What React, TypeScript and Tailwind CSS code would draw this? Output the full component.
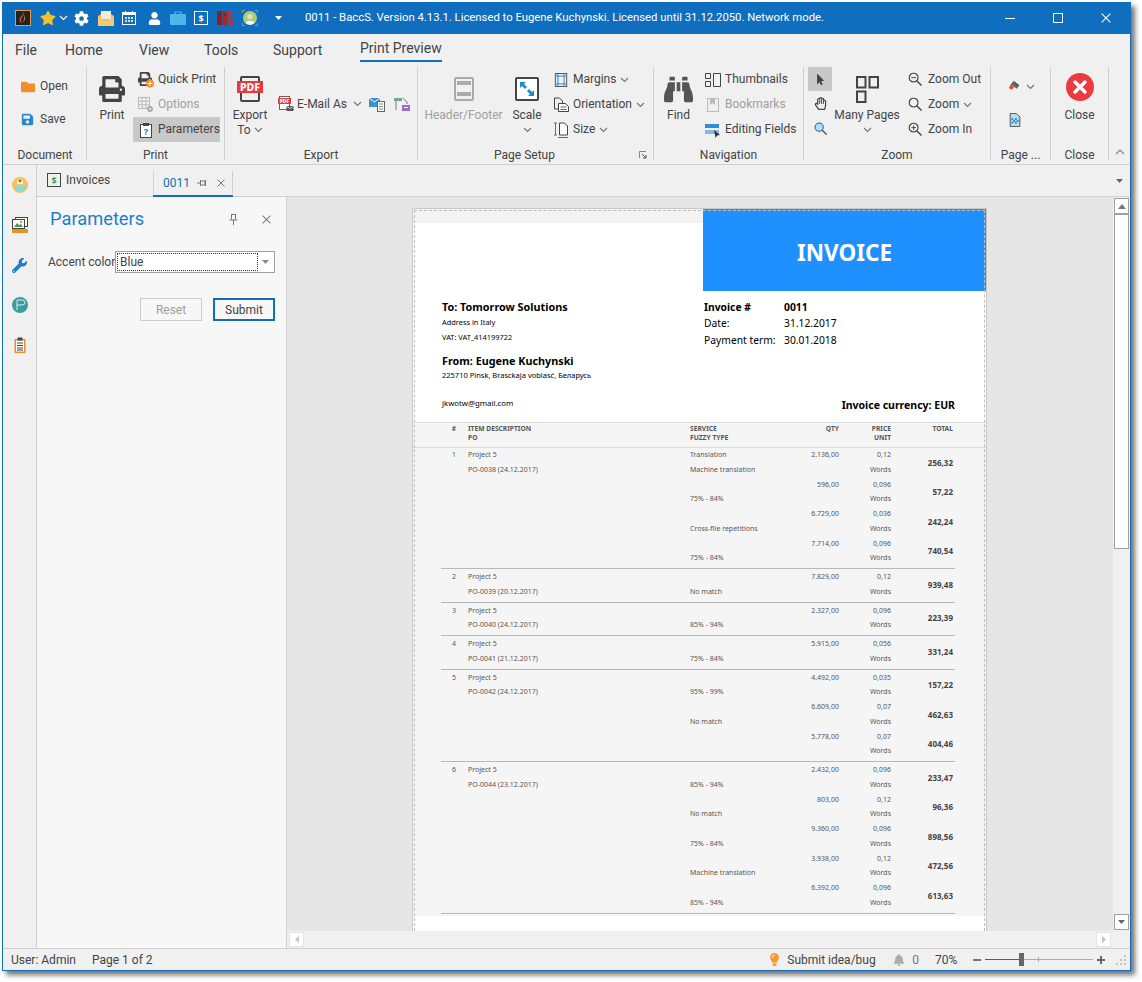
import React from "react";
import {
  FaBell,
  FaBinoculars,
  FaCog,
  FaFolder,
  FaLightbulb,
  FaMousePointer,
  FaPrint,
  FaRegHandPaper,
  FaSave,
  FaStar,
  FaUser,
  FaWrench,
} from "react-icons/fa";

const Chevron = ({ className = "" }: { className?: string }) => (
  <svg width="9" height="6" viewBox="0 0 9 6" className={`shrink-0 ${className}`}>
    <path d="M1 1l3.5 3.5L8 1" fill="none" stroke="#777" strokeWidth="1.2" />
  </svg>
);

const Caret = ({ color = "#666" }: { color?: string }) => (
  <svg width="7" height="4" viewBox="0 0 7 4" className="shrink-0">
    <path d="M0 0h7L3.500 4z" fill={color} />
  </svg>
);

const Glyph = ({ size = 16, children }: { size?: number; children: React.ReactNode }) => (
  <svg width={size} height={size} viewBox="0 0 16 16" className="shrink-0">
    {children}
  </svg>
);

const AppLogo = () => (
  <Glyph>
    <rect x="0.5" y="0.500" width="15" height="15" fill="#222" stroke="#e89a3c" />
    <path d="M9 2c1 3-3 5-3 8 0 2 1 3 2 3-3 0-4-2-3-5 1-2 3-3 4-6z" fill="#d8503c" />
    <path d="M9 5c1 2 0 5-1 7 2-1 3-5 1-7z" fill="#e89a3c" />
  </Glyph>
);

const MailIcon = () => (
  <Glyph>
    <path d="M0 6l8-5 8 5v9H0z" fill="#edbf5f" />
    <rect x="3" y="1" width="10" height="8" fill="#f5ead6" />
    <path d="M0 7l8 5 8-5v9H0z" fill="#f1cb74" />
  </Glyph>
);

const CalendarIcon = () => (
  <Glyph>
    <rect x="1.500" y="2.500" width="13" height="12" fill="none" stroke="#fff" />
    <path d="M2 3h12v2H2zM4 1h1v3H4zM11 1h1v3h-1z" fill="#fff" />
    <path d="M4 7h2v2H4zM7 7h2v2H7zM10 7h2v2h-2zM4 10h2v2H4zM7 10h2v2H7zM10 10h2v2h-2z" fill="#cfe3f5" />
  </Glyph>
);

const CaseIcon = () => (
  <Glyph>
    <path d="M5 4V2h6v2" fill="none" stroke="#4cb8ea" strokeWidth="1.200" />
    <rect x="0" y="4" width="16" height="11" rx="1" fill="#4cb8ea" />
  </Glyph>
);

const DollarDoc = ({ dark = false }: { dark?: boolean }) => (
  <svg width="14" height="14" viewBox="0 0 14 14" className="shrink-0">
    <rect x="0.500" y="0.500" width="13" height="13" fill={dark ? "none" : "#106ebe"} stroke={dark ? "#444" : "#fff"} />
    <text x="7" y="10.500" textAnchor="middle" fontSize="9" fontWeight="700" fill={dark ? "#2e9e4a" : "#fff"} fontFamily="Noto Sans, sans-serif">
      $
    </text>
  </svg>
);

const BooksIcon = () => (
  <Glyph>
    <rect x="0" y="1" width="5" height="14" fill="#8e1f24" />
    <rect x="5.500" y="1" width="5" height="14" fill="#a5262b" />
    <path d="M11 2l3-1 2 14h-4z" fill="#c22f32" />
    <path d="M1 4h3v1H1zM6.500 4h3v1h-3z" fill="#333" />
  </Glyph>
);

const AvatarIcon = () => (
  <Glyph>
    <circle cx="8" cy="8" r="7" fill="#a4d07c" />
    <circle cx="8" cy="6.500" r="2.500" fill="#f5d9b8" />
    <path d="M3.500 13c1-3 8-3 9 0a7 7 0 0 1-9 0z" fill="#f7f7f7" />
    <path d="M0 0h3v1H1v2H0zM16 0h-3v1h2v2h1zM0 16h3v-1H1v-2H0zM16 16h-3v-1h2v-2h1z" fill="#7a9a8a" />
  </Glyph>
);

const QuickPrintIcon = () => (
  <Glyph>
    <FaPrint x="0" y="0" size="14" color="#444" />
    <circle cx="12" cy="11.500" r="4" fill="#ee8f2c" />
    <path d="M11.500 9h1v2h2v1h-2v2h-1v-2h-2v-1h2z" fill="#fff" />
  </Glyph>
);

const OptionsIcon = () => (
  <Glyph>
    <path d="M.5.500h11v11H.5zM4.200.500v11M7.800.500v11M.5 4.200h11M.5 7.800h11" fill="none" stroke="#bbb" />
    <circle cx="12" cy="12" r="3" fill="#aaa" />
    <circle cx="12" cy="12" r="1" fill="#f0f0f0" />
  </Glyph>
);

const ParamIcon = () => (
  <Glyph>
    <rect x="2.500" y="2.500" width="11" height="13" fill="#fff" stroke="#444" />
    <rect x="5" y="1" width="6" height="3" fill="#444" />
    <text x="8" y="13" textAnchor="middle" fontSize="9" fontWeight="700" fill="#106ebe" fontFamily="Noto Sans, sans-serif">
      ?
    </text>
  </Glyph>
);

const PdfIcon = () => (
  <svg width="26" height="27" viewBox="0 0 26 27" className="shrink-0">
    <path d="M4 8V2q0-1 1-1h16q1 0 1 1v6M4 17v7q0 1 1 1h16q1 0 1-1v-7" fill="none" stroke="#444" strokeWidth="2" />
    <rect x="0" y="5" width="26" height="12" fill="#ea3a3e" />
    <text x="13" y="15" textAnchor="middle" fontSize="10.500" fontWeight="800" fill="#fff" fontFamily="Noto Sans, sans-serif">
      PDF
    </text>
  </svg>
);

const PdfMailIcon = () => (
  <Glyph>
    <rect x="1.500" y="0.500" width="10" height="13" fill="#fff" stroke="#666" />
    <rect x="0" y="2" width="13" height="6" fill="#e23b3e" />
    <text x="6.500" y="7" textAnchor="middle" fontSize="5" fontWeight="800" fill="#fff" fontFamily="Noto Sans, sans-serif">
      PDF
    </text>
    <rect x="8.500" y="10" width="7" height="5" fill="#555" />
    <path d="M9 10.500l3 2 3-2" fill="none" stroke="#fff" strokeWidth=".7" />
  </Glyph>
);

const MailDocIcon = () => (
  <Glyph>
    <path d="M0 2h11v9H0z" fill="#3f8fd2" />
    <path d="M0 2l5.500 4L11 2" fill="none" stroke="#fff" />
    <rect x="8.500" y="5.500" width="7" height="10" fill="#fff" stroke="#666" />
    <path d="M10 8h4M10 10.500h4M10 13h4" stroke="#888" />
  </Glyph>
);

const DocLockIcon = () => (
  <Glyph>
    <path d="M0 2h8v3H0z" fill="#6da89c" />
    <path d="M2 5v9M8.500 2L13 6v2" fill="none" stroke="#777" />
    <rect x="8" y="9" width="8" height="6" fill="#9c6fc0" />
    <path d="M10 11.500h4" stroke="#fff" />
  </Glyph>
);

const HeaderFooterIcon = () => (
  <svg width="20" height="24" viewBox="0 0 20 24" className="shrink-0">
    <rect x="1" y="1" width="18" height="22" rx="1" fill="none" stroke="#aaa" strokeWidth="2" />
    <rect x="3" y="4" width="14" height="4" fill="#aaa" />
    <rect x="3" y="15" width="14" height="4" fill="#aaa" />
  </svg>
);

const ScaleIcon = () => (
  <svg width="24" height="24" viewBox="0 0 24 24" className="shrink-0">
    <rect x="1" y="1" width="22" height="22" rx="1" fill="#fff" stroke="#444" strokeWidth="2" />
    <path d="M5 5h6l-2 2 3 3-2 2-3-3-2 2zM19 19h-6l2-2-3-3 2-2 3 3 2-2z" fill="#1d8bd1" />
  </svg>
);

const MarginsIcon = () => (
  <Glyph size={14}>
    <rect x="1.500" y="0.500" width="13" height="15" fill="none" stroke="#444" />
    <path d="M4.500 1v14M11.500 1v14M2 3.500h12M2 12.500h12" stroke="#1d7fc4" />
  </Glyph>
);

const OrientationIcon = () => (
  <Glyph>
    <path d="M1.500 1h5l3 3v8h-8z" fill="#f0f0f0" stroke="#444" />
    <path d="M5.500 6.500h7l3 3v5h-10z" fill="#fff" stroke="#444" />
    <path d="M7.500 10h6M7.500 12.500h6" stroke="#666" />
  </Glyph>
);

const SizeIcon = () => (
  <Glyph>
    <path d="M6.500 1h5l3 3v9h-8z" fill="#fff" stroke="#444" />
    <path d="M1 1h3M2.500 1v12M1 13h3M5 15.500h10" stroke="#1d7fc4" />
  </Glyph>
);

const ThumbsIcon = () => (
  <Glyph>
    <path d="M.5 1.500h5v5h-5zM.5 9.500h5v5h-5zM8.500 1.500h7v13h-7z" fill="none" stroke="#444" />
  </Glyph>
);

const BookmarkIcon = () => (
  <Glyph>
    <rect x="2.500" y="1.500" width="11" height="13" fill="none" stroke="#bbb" />
    <path d="M5 1h5v7L7.500 6 5 8z" fill="#bbb" />
  </Glyph>
);

const EditFieldsIcon = () => (
  <Glyph>
    <rect x="0" y="2" width="14" height="4" fill="#2f8fd6" />
    <rect x="0" y="8" width="14" height="4" fill="#7fbde8" />
    <path d="M9 8l6 5-3 .5-1.500 2.500z" fill="#333" />
  </Glyph>
);

const ZoomGlass = ({ mark = "" }: { mark?: string }) => (
  <Glyph size={15}>
    <circle cx="6" cy="6" r="4.700" fill="none" stroke="#444" strokeWidth="1.200" />
    <path d="M9.500 9.500l5 5" stroke="#444" strokeWidth="1.500" />
    {mark && <path d={mark} stroke="#444" />}
  </Glyph>
);

const ManyPagesIcon = () => (
  <svg width="23" height="27" viewBox="0 0 23 27" className="shrink-0">
    <path d="M1 1h8.500v10.500H1zM13.500 1H22v10.500h-8.500zM1 15.500h8.500V26H1z" fill="none" stroke="#444" strokeWidth="2" />
  </svg>
);

const PaintIcon = () => (
  <Glyph size={14}>
    <path d="M6 1l7 5-3 4-7-5z" fill="#666" />
    <path d="M3 5l4 3-3 3-3-2z" fill="#e0474c" />
    <path d="M7 2l5 4" stroke="#333" />
  </Glyph>
);

const DocDotsIcon = () => (
  <Glyph size={14}>
    <path d="M2.500 .5h7l4 4v11h-11z" fill="#bcdcf2" stroke="#444" />
    <path d="M4 6h2v2H4zM8 6h2v2H8zM6 8h2v2H6zM10 8h2v2h-2zM4 10h2v2H4zM8 10h2v2H8z" fill="#1d7fc4" />
  </Glyph>
);

const CloseCircle = () => (
  <svg width="28" height="28" viewBox="0 0 28 28" className="shrink-0">
    <circle cx="14" cy="14" r="14" fill="#ec3b3f" />
    <path d="M9 9l10 10M19 9L9 19" stroke="#fff" strokeWidth="3.500" strokeLinecap="round" />
  </svg>
);

const PinIcon = () => (
  <svg width="10" height="8" viewBox="0 0 10 8" className="shrink-0">
    <path d="M0 4h3M3.500 1v6M3.500 2h4.500v4H3.500M8.500 1v6" fill="none" stroke="#777" />
  </svg>
);

const SmallX = ({ size = 8, color = "#666" }: { size?: number; color?: string }) => (
  <svg width={size} height={size} viewBox="0 0 8 8" className="shrink-0">
    <path d="M.5.500l7 7M7.500.500l-7 7" stroke={color} strokeWidth=".9" />
  </svg>
);

const NurseIcon = () => (
  <Glyph>
    <circle cx="8" cy="8" r="8" fill="#f5c35e" />
    <path d="M5 4h6v3H5z" fill="#eee" />
    <path d="M3 9h10v4q-5 4-10 0z" fill="#8fd8d2" />
    <rect x="7" y="3" width="2" height="2" fill="#666" />
  </Glyph>
);

const PicturesIcon = () => (
  <Glyph>
    <rect x="3.500" y="0.500" width="12" height="9" fill="#fff" stroke="#444" />
    <rect x="0.500" y="2.500" width="12" height="9" fill="#fff" stroke="#444" />
    <path d="M2 10l3-4 2 2 2-1 2 3z" fill="#4f9a5a" />
    <circle cx="9" cy="5" r="1.200" fill="#ee8f2c" />
    <rect x="0" y="12" width="16" height="4" fill="#ee8f2c" />
  </Glyph>
);

const TealPIcon = () => (
  <Glyph>
    <circle cx="8" cy="8" r="8" fill="#3c9c9e" />
    <path d="M5 13V3h5q3 0 3 2.500T10 8H5" fill="none" stroke="#d8eeee" />
  </Glyph>
);

const ClipboardIcon = () => (
  <Glyph>
    <rect x="2.500" y="2" width="11" height="14" fill="#ee8f2c" />
    <rect x="4" y="3.500" width="8" height="11" fill="#fff" />
    <rect x="5.500" y="0.500" width="5" height="3" fill="#444" />
    <path d="M5 6h6M5 8.500h6M5 11h6M5 13h6" stroke="#444" />
  </Glyph>
);

const SmallBtn = ({
  icon,
  label,
  chevron,
  disabled,
  active,
  className = "",
}: {
  icon: React.ReactNode;
  label: string;
  chevron?: boolean;
  disabled?: boolean;
  active?: boolean;
  className?: string;
}) => (
  <div className={`flex h-[25px] items-center ${active ? "bg-[#c8c8c8]" : ""} ${className}`}>
    <div className="flex w-[25px] shrink-0 items-center justify-center">{icon}</div>
    <span className={`-mt-[1px] whitespace-nowrap ${disabled ? "text-[#a0a0a0]" : ""}`}>{label}</span>
    {chevron && <Chevron className="ml-[4px]" />}
  </div>
);

const LargeBtn = ({
  icon,
  label,
  chevron,
  inlineChevron,
  disabled,
  width,
}: {
  icon: React.ReactNode;
  label: string;
  chevron?: boolean;
  inlineChevron?: string;
  disabled?: boolean;
  width: string;
}) => (
  <div className={`flex shrink-0 flex-col items-center ${width}`}>
    <div className="flex h-[39px] items-center pt-[5px]">{icon}</div>
    <span className={`mt-[1px] h-[16px] whitespace-nowrap leading-[16px] ${disabled ? "text-[#a0a0a0]" : ""}`}>{label}</span>
    {inlineChevron && (
      <span className="flex h-[14px] items-center gap-[3px] leading-[14px]">
        {inlineChevron}
        <Chevron />
      </span>
    )}
    {chevron && (
      <span className="flex h-[14px] items-center">
        <Chevron />
      </span>
    )}
  </div>
);

const Group = ({
  label,
  width,
  children,
  launcher,
}: {
  label: string;
  width: string;
  children: React.ReactNode;
  launcher?: boolean;
}) => (
  <div className={`flex h-[93px] shrink-0 flex-col border-r border-[#d0d0d0] ${width}`}>
    <div className="flex h-[82px] min-w-0">{children}</div>
    <div className="flex h-[11px] items-center justify-center whitespace-nowrap">
      <span className="relative">{label}</span>
      {launcher && (
        <svg width="8" height="8" viewBox="0 0 8 8" className="ml-[84px] mr-[-70px]">
          <path d="M.5 7V.5H7" fill="none" stroke="#888" />
          <path d="M3 3l4 4M7 4v3H4" fill="none" stroke="#555" />
        </svg>
      )}
    </div>
  </div>
);

type Sub = { service?: string; service2?: string; qty: string; price: string; total: string };
type Row = { no: string; po: string; subs: Sub[] };

const rows: Row[] = [
  {
    no: "1",
    po: "PO-0038 (24.12.2017)",
    subs: [
      { service: "Translation", service2: "Machine translation", qty: "2.136,00", price: "0,12", total: "256,32" },
      { service2: "75% - 84%", qty: "596,00", price: "0,096", total: "57,22" },
      { service2: "Cross-file repetitions", qty: "6.729,00", price: "0,036", total: "242,24" },
      { service2: "75% - 84%", qty: "7.714,00", price: "0,096", total: "740,54" },
    ],
  },
  { no: "2", po: "PO-0039 (20.12.2017)", subs: [{ service2: "No match", qty: "7.829,00", price: "0,12", total: "939,48" }] },
  { no: "3", po: "PO-0040 (24.12.2017)", subs: [{ service2: "85% - 94%", qty: "2.327,00", price: "0,096", total: "223,39" }] },
  { no: "4", po: "PO-0041 (21.12.2017)", subs: [{ service2: "75% - 84%", qty: "5.915,00", price: "0,056", total: "331,24" }] },
  {
    no: "5",
    po: "PO-0042 (24.12.2017)",
    subs: [
      { service2: "95% - 99%", qty: "4.492,00", price: "0,035", total: "157,22" },
      { service2: "No match", qty: "6.609,00", price: "0,07", total: "462,63" },
      { qty: "5.778,00", price: "0,07", total: "404,46" },
    ],
  },
  {
    no: "6",
    po: "PO-0044 (23.12.2017)",
    subs: [
      { service2: "85% - 94%", qty: "2.432,00", price: "0,096", total: "233,47" },
      { service2: "No match", qty: "803,00", price: "0,12", total: "96,36" },
      { service2: "75% - 84%", qty: "9.360,00", price: "0,096", total: "898,56" },
      { service2: "Machine translation", qty: "3.938,00", price: "0,12", total: "472,56" },
      { service2: "85% - 94%", qty: "6.392,00", price: "0,096", total: "613,63" },
    ],
  },
];

const Line = ({ children }: { children?: React.ReactNode }) => (
  <div className="h-[14.750px] whitespace-nowrap leading-[14.750px]">{children}</div>
);

const InvoiceTable = () => (
  <div className="bg-[#f5f5f5] pb-[2px] text-[7px] text-[#555]">
    <div className="flex h-[26px] border-y border-[#dcdcdc] pl-[28px] text-[6.700px] leading-[9px] font-bold text-[#555]">
      <div className="w-[15px] pt-[1px] text-right">#</div>
      <div className="ml-[12px] w-[222px] pt-[1px]">
        ITEM DESCRIPTION
        <br />
        PO
      </div>
      <div className="w-[100px] pt-[1px]">
        SERVICE
        <br />
        FUZZY TYPE
      </div>
      <div className="w-[49px] pt-[1px] text-right">QTY</div>
      <div className="w-[52px] pt-[1px] text-right">
        PRICE
        <br />
        UNIT
      </div>
      <div className="w-[62px] pt-[1px] text-right">TOTAL</div>
    </div>
    {rows.map((row, r) => (
      <div key={row.no} className={`mr-[31px] ml-[28px] border-b border-[#b8b8b8] pb-[2px] ${r > 0 ? "pt-[1px]" : ""}`}>
        {row.subs.map((sub, i) => (
          <div key={i} className="flex h-[29.500px]">
            <div className="w-[15px] text-right">
              <Line>{i === 0 ? row.no : ""}</Line>
            </div>
            <div className="ml-[12px] w-[222px]">
              <Line>{i === 0 ? "Project 5" : ""}</Line>
              <Line>{i === 0 ? row.po : ""}</Line>
            </div>
            <div className="w-[100px]">
              <Line>{sub.service}</Line>
              <Line>{sub.service2}</Line>
            </div>
            <div className="w-[49px] text-right">
              <Line>{sub.qty}</Line>
            </div>
            <div className="w-[52px] text-right">
              <Line>{sub.price}</Line>
              <Line>Words</Line>
            </div>
            <div className="flex w-[63px] items-center justify-end pr-[1px] text-[8px] font-bold text-[#444]">{sub.total}</div>
          </div>
        ))}
      </div>
    ))}
  </div>
);

const Page = () => (
  <div className="relative h-full w-[573px] bg-white font-['Noto_Sans',sans-serif] text-black outline outline-[#c8c8c8]">
    <div className="pointer-events-none absolute inset-x-[1px] top-[1px] bottom-0 border-x border-t border-dashed border-[#bdbdbd]" />
    <div className="flex h-[82px]">
      <div className="w-[290px]">
        <div className="h-[14px] bg-[#f3f3f3]" />
      </div>
      <div className="flex flex-1 items-center justify-center bg-[#1e90ff] pt-[5px] text-[22.500px] font-bold text-white">INVOICE</div>
    </div>
    <div className="flex h-[131px]">
      <div className="w-[290px] pt-[8px] pl-[29px]">
        <div className="h-[16px] text-[10.800px] leading-[16px] font-bold">To: Tomorrow Solutions</div>
        <div className="h-[14px] text-[7.400px] leading-[14px]">Address in Italy</div>
        <div className="mt-[1px] h-[14px] text-[7.400px] leading-[14px]">VAT: VAT_414199722</div>
        <div className="mt-[9px] h-[16px] text-[10.800px] leading-[16px] font-bold">From: Eugene Kuchynski</div>
        <div className="h-[12px] whitespace-nowrap text-[7.500px] leading-[12px]">225710 Pinsk, Brasckaja voblasć, Беларусь</div>
        <div className="mt-[16px] h-[12px] text-[7.800px] leading-[12px]">jkwotw@gmail.com</div>
      </div>
      <div className="flex flex-1 flex-col pt-[8px] pr-[31px] pl-[1px] text-[10.300px]">
        <div className="flex h-[16px] leading-[16px] font-bold">
          <span className="w-[80px]">Invoice #</span>
          <span>0011</span>
        </div>
        <div className="flex h-[17px] leading-[17px]">
          <span className="w-[80px]">Date:</span>
          <span>31.12.2017</span>
        </div>
        <div className="flex h-[17px] leading-[17px]">
          <span className="w-[80px]">Payment term:</span>
          <span>30.01.2018</span>
        </div>
        <div className="mt-[48px] h-[16px] text-right text-[10.500px] leading-[16px] font-bold">Invoice currency: EUR</div>
      </div>
    </div>
    <InvoiceTable />
  </div>
);

export default function App() {
  return (
    <div className="h-[982px] w-[1142px] overflow-hidden bg-white pt-[2px] pl-[2px] font-['Roboto',sans-serif] text-[12px] text-[#444]">
      <div className="flex h-[969px] w-[1129px] flex-col border border-[#106ebe] bg-[#f0f0f0] shadow-[4px_4px_5px_rgba(0,0,0,0.55)]">
        {/* title bar */}
        <div className="flex h-[31px] shrink-0 items-center bg-[#106ebe] pb-[1px] text-white">
          <div className="flex w-[34px] justify-center pl-[6px]">
            <AppLogo />
          </div>
          <div className="ml-[2px] flex w-[30px] items-center justify-center gap-[3px]">
            <FaStar size={16} color="#f5c02c" />
            <Chevron className="[&>path]:stroke-white" />
          </div>
          <div className="ml-[1px] flex w-[22px] justify-center">
            <FaCog size={15} color="#fff" />
          </div>
          <div className="ml-[2px] flex w-[23px] justify-center">
            <MailIcon />
          </div>
          <div className="flex w-[24px] justify-center">
            <CalendarIcon />
          </div>
          <div className="ml-[1px] flex w-[24px] justify-center">
            <FaUser size={13} color="#fff" />
          </div>
          <div className="flex w-[23px] justify-center">
            <CaseIcon />
          </div>
          <div className="flex w-[24px] justify-center">
            <DollarDoc />
          </div>
          <div className="flex w-[24px] justify-center">
            <BooksIcon />
          </div>
          <div className="flex w-[25px] justify-center">
            <AvatarIcon />
          </div>
          <div className="ml-[12px] flex w-[8px] justify-center">
            <Caret color="#fff" />
          </div>
          <span className="ml-[23px] whitespace-nowrap text-[11.300px]">
            0011 - BaccS. Version 4.13.1. Licensed to Eugene Kuchynski. Licensed until 31.12.2050. Network mode.
          </span>
          <div className="ml-auto flex items-center pr-[19px]">
            <div className="h-[1px] w-[10px] bg-white" />
            <div className="ml-[38px] h-[10px] w-[10px] border border-white" />
            <div className="ml-[38px]">
              <SmallX size={10} color="#fff" />
            </div>
          </div>
        </div>

        {/* ribbon tabs */}
        <div className="flex h-[30px] shrink-0 items-start pl-[12px] text-[14px] leading-[26px]">
          <div className="w-[50px] pt-[3px]">File</div>
          <div className="w-[74px] pt-[3px]">Home</div>
          <div className="w-[65px] pt-[3px]">View</div>
          <div className="w-[69px] pt-[3px]">Tools</div>
          <div className="w-[87px] pt-[3px]">Support</div>
          <div className="h-[28px] border-b-2 border-[#106ebe] pt-[1px] leading-[26px]">Print Preview</div>
        </div>

        {/* ribbon */}
        <div className="flex h-[101px] shrink-0 border-b border-[#d0d0d0] pt-[3px] pl-[1px]">
          <Group label="Document" width="w-[83px]">
            <div className="flex flex-col pt-[7px] pl-[11px]">
              <SmallBtn icon={<FaFolder size={14} color="#ee8f2c" />} label="Open" className="mb-[8px]" />
              <SmallBtn icon={<FaSave size={13} color="#2a86d0" />} label="Save" />
            </div>
          </Group>
          <Group label="Print" width="w-[138px]">
            <LargeBtn icon={<FaPrint size={26} color="#444" />} label="Print" width="w-[50px]" />
            <div className="-ml-[4px] flex flex-col">
              <SmallBtn icon={<QuickPrintIcon />} label="Quick Print" />
              <SmallBtn icon={<OptionsIcon />} label="Options" disabled />
              <SmallBtn icon={<ParamIcon />} label="Parameters" active className="w-[87px]" />
            </div>
          </Group>
          <Group label="Export" width="w-[193px]">
            <LargeBtn icon={<PdfIcon />} label="Export" inlineChevron="To" width="w-[50px]" />
            <div className="flex h-[75px] items-center pb-[1px]">
              <div className="flex h-[25px] items-center">
                <div className="flex w-[22px] justify-center">
                  <PdfMailIcon />
                </div>
                <span className="w-[56px] whitespace-nowrap">E-Mail As</span>
                <Chevron />
              </div>
              <div className="ml-[7px]">
                <MailDocIcon />
              </div>
              <div className="ml-[9px]">
                <DocLockIcon />
              </div>
            </div>
          </Group>
          <Group label="Page Setup" width="w-[236px]" launcher>
            <LargeBtn icon={<HeaderFooterIcon />} label="Header/Footer" disabled width="w-[91px]" />
            <LargeBtn icon={<ScaleIcon />} label="Scale" chevron width="w-[36px]" />
            <div className="ml-[3px] flex flex-col">
              <SmallBtn icon={<MarginsIcon />} label="Margins" chevron />
              <SmallBtn icon={<OrientationIcon />} label="Orientation" chevron />
              <SmallBtn icon={<SizeIcon />} label="Size" chevron />
            </div>
          </Group>
          <Group label="Navigation" width="w-[150px]">
            <LargeBtn icon={<FaBinoculars size={29} color="#555" />} label="Find" width="w-[49px]" />
            <div className="-ml-[3px] flex flex-col">
              <SmallBtn icon={<ThumbsIcon />} label="Thumbnails" />
              <SmallBtn icon={<BookmarkIcon />} label="Bookmarks" disabled />
              <SmallBtn icon={<EditFieldsIcon />} label="Editing Fields" />
            </div>
          </Group>
          <Group label="Zoom" width="w-[187px]">
            <div className="ml-[4px] flex w-[24px] flex-col">
              <div className="flex h-[24px] items-center justify-center bg-[#c8c8c8]">
                <FaMousePointer size={11} color="#444" />
              </div>
              <div className="flex h-[25px] items-center justify-center">
                <FaRegHandPaper size={13} color="#444" />
              </div>
              <div className="flex h-[25px] items-center justify-center">
                <svg width="13" height="13" viewBox="0 0 15 15">
                  <circle cx="6" cy="6" r="4.700" fill="#bcdcf2" stroke="#1d7fc4" strokeWidth="1.400" />
                  <path d="M9.500 9.500l5 5" stroke="#555" strokeWidth="1.600" />
                </svg>
              </div>
            </div>
            <LargeBtn icon={<ManyPagesIcon />} label="Many Pages" chevron width="w-[70px]" />
            <div className="ml-[1px] flex flex-col">
              <SmallBtn icon={<ZoomGlass mark="M3.500 6h5" />} label="Zoom Out" />
              <SmallBtn icon={<ZoomGlass />} label="Zoom" chevron />
              <SmallBtn icon={<ZoomGlass mark="M3.500 6h5M6 3.500v5" />} label="Zoom In" />
            </div>
          </Group>
          <Group label="Page ..." width="w-[60px]">
            <div className="flex flex-col pt-[7px] pl-[17px]">
              <div className="flex h-[25px] items-center gap-[4px]">
                <PaintIcon />
                <Chevron />
              </div>
              <div className="mt-[8px] flex h-[25px] items-center">
                <DocDotsIcon />
              </div>
            </div>
          </Group>
          <Group label="Close" width="w-[58px]">
            <div className="flex w-full flex-col items-center pt-[6px]">
              <CloseCircle />
              <span className="mt-[6px] leading-[16px]">Close</span>
            </div>
          </Group>
          <div className="flex h-[93px] flex-1 items-end justify-center pb-[5px]">
            <svg width="10" height="6" viewBox="0 0 10 6">
              <path d="M1 5l4-4 4 4" fill="none" stroke="#888" strokeWidth="1.200" />
            </svg>
          </div>
        </div>

        {/* main */}
        <div className="flex min-h-0 flex-1">
          <div className="flex w-[34px] shrink-0 flex-col items-center gap-[24px] border-r border-[#d0d0d0] pt-[12px]">
            <NurseIcon />
            <PicturesIcon />
            <div className="flex h-[16px] items-center">
              <FaWrench size={15} color="#1d7fc4" />
            </div>
            <TealPIcon />
            <ClipboardIcon />
          </div>
          <div className="flex min-w-0 flex-1 flex-col">
            {/* document tabs */}
            <div className="flex h-[32px] shrink-0 border-b border-[#d0d0d0]">
              <div className="flex h-[30px] w-[116px] items-center gap-[5px] pl-[10px]">
                <DollarDoc dark />
                <span>Invoices</span>
              </div>
              <div className="flex h-[32px] w-[80px] flex-col">
                <div className="mt-[6px] flex h-[23px] items-center border-x border-[#d0d0d0] pl-[9px]">
                  <span className="w-[34px] text-[#106ebe]">0011</span>
                  <PinIcon />
                  <div className="ml-[10px]">
                    <SmallX />
                  </div>
                </div>
                <div className="mt-[1px] h-[2px] bg-[#106ebe]" />
              </div>
              <div className="ml-auto flex items-center pr-[7px]">
                <Caret />
              </div>
            </div>

            <div className="flex min-h-0 flex-1">
              <div className="flex w-[250px] shrink-0 flex-col border-r border-[#d0d0d0] bg-[#f7f7f7]">
                <div className="flex items-center pt-[10px] pl-[13px]">
                  <span className="w-[179px] text-[18.300px] leading-[24px] text-[#1b7fcc]">Parameters</span>
                  <svg width="9" height="11" viewBox="0 0 9 11">
                    <path d="M2 .5h5M2.500 .5v5M6.500 .5v5M.5 6h8M4.500 6v5" fill="none" stroke="#777" />
                  </svg>
                  <div className="ml-[24px]">
                    <SmallX size={9} color="#777" />
                  </div>
                </div>
                <div className="mt-[20px] flex items-center pl-[11px]">
                  <span className="w-[67px] whitespace-nowrap">Accent color</span>
                  <div className="flex h-[22px] w-[160px] items-center border border-[#a0a0a0] bg-white p-[1px]">
                    <div className="flex h-full w-[141px] items-center border border-dotted border-[#333] pl-[2px]">Blue</div>
                    <div className="flex flex-1 justify-center">
                      <Caret color="#888" />
                    </div>
                  </div>
                </div>
                <div className="mt-[25px] flex justify-end gap-[11px] pr-[11px]">
                  <div className="flex h-[23px] w-[62px] items-center justify-center border border-[#cccccc] text-[#a0a0a0]">Reset</div>
                  <div className="flex h-[23px] w-[62px] items-center justify-center border-2 border-[#106ebe]">Submit</div>
                </div>
              </div>
              <div className="flex min-w-0 flex-1 flex-col">
                <div className="flex min-h-0 flex-1">
                  <div className="min-w-0 flex-1 overflow-hidden bg-[#e6e6e6] pt-[12px] pl-[126px]">
                    <Page />
                  </div>
                  <div className="flex w-[17px] shrink-0 flex-col items-center pt-[1px]">
                    <div className="flex h-[16px] w-[15px] items-center justify-center border border-[#a0a0a0] bg-white">
                      <svg width="8" height="5" viewBox="0 0 8 5">
                        <path d="M0 5h8L4 0z" fill="#777" />
                      </svg>
                    </div>
                    <div className="h-[335px] w-[15px] border border-[#a0a0a0] bg-white" />
                    <div className="flex-1" />
                    <div className="mb-[1px] flex h-[16px] w-[15px] items-center justify-center border border-[#a0a0a0] bg-white">
                      <Caret />
                    </div>
                  </div>
                </div>
                <div className="flex h-[17px] shrink-0 items-center justify-between pr-[19px] pl-[2px]">
                  <div className="flex h-[15px] w-[15px] items-center justify-center border border-[#e4e4e4] bg-white">
                    <svg width="4" height="7" viewBox="0 0 4 7">
                      <path d="M4 0v7L0 3.500z" fill="#c4c4c4" />
                    </svg>
                  </div>
                  <div className="flex h-[15px] w-[15px] items-center justify-center border border-[#e4e4e4] bg-white">
                    <svg width="4" height="7" viewBox="0 0 4 7">
                      <path d="M0 0v7l4-3.500z" fill="#c4c4c4" />
                    </svg>
                  </div>
                </div>
              </div>
            </div>
          </div>
        </div>

        {/* status bar */}
        <div className="flex h-[22px] shrink-0 items-center border-t border-[#d0d0d0] pl-[8px]">
          <span className="w-[81px]">User: Admin</span>
          <span>Page 1 of 2</span>
          <div className="ml-auto flex items-center pr-[3px]">
            <FaLightbulb size={13} color="#f79a2e" />
            <span className="ml-[6px] w-[88px] whitespace-nowrap">Submit idea/bug</span>
            <div className="ml-[18px]">
              <FaBell size={12} color="#aaa" />
            </div>
            <span className="ml-[7px] text-[#777]">0</span>
            <span className="ml-[16px] w-[38px]">70%</span>
            <div className="h-[2px] w-[8px] bg-[#777]" />
            <div className="ml-[4px] flex h-[13px] w-[108px] items-center">
              <div className="h-[1px] w-[34px] bg-[#106ebe]" />
              <div className="h-[13px] w-[5px] bg-[#666]" />
              <div className="h-[1px] w-[14px] bg-[#aaa]" />
              <div className="h-[5px] w-[1px] bg-[#aaa]" />
              <div className="h-[1px] flex-1 bg-[#aaa]" />
            </div>
            <svg width="8" height="8" viewBox="0 0 8 8" className="ml-[4px]">
              <path d="M0 4h8M4 0v8" stroke="#666" strokeWidth="2" />
            </svg>
            <svg width="12" height="12" viewBox="0 0 12 12" className="ml-[10px]">
              <path d="M9 1h2v2H9zM5 5h2v2H5zM9 5h2v2H9zM1 9h2v2H1zM5 9h2v2H5zM9 9h2v2H9z" fill="#c4c4c4" />
            </svg>
          </div>
        </div>
      </div>
    </div>
  );
}
